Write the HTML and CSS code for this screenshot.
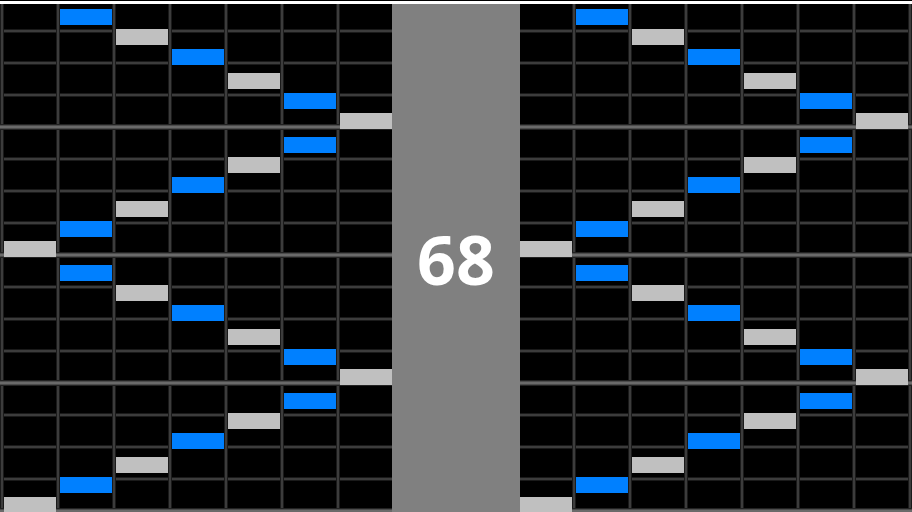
FILE: index.html
```html
<!doctype html>
<html>

<head>
    <title>Roll</title>
    <link rel="stylesheet" href="styles.css">
</head>

<body>
    <div class="topbar"></div>

    <div class="stage">
        <div class="roll" id="rollLeft"></div>
        <div class="counter">68</div>
        <div class="roll roll-right" id="rollRight"></div>
    </div>

    <script>
        // zigzag of note columns, one entry per note
        const cols = [1, 2, 3, 4, 5, 6, 5, 4, 3, 2, 1, 0];

        function fillRoll(roll, shift) {
            for (let i = 0; i < 24; i++) {
                const col = cols[i % cols.length];
                const note = document.createElement('div');
                note.className = 'note ' + (col % 2 ? 'blue' : 'grey');
                // three notes per 64px beat
                const top = 5 + 64 * Math.floor(i / 3) + 20 * (i % 3);
                note.style.top = top + 'px';
                note.style.left = (56 * col + 4 + shift) + 'px';
                roll.appendChild(note);
            }
        }

        fillRoll(document.getElementById('rollLeft'), 0);
        fillRoll(document.getElementById('rollRight'), -4);
    </script>
</body>
</html>
```

FILE: styles.css
```css
body {
    margin: 0;
    background: black;
    overflow: hidden;
}

/* Thin white strip along the top */
.topbar {
    height: 3px;
    border-top: 1px solid black;
    background: white;
}

.stage {
    display: flex;
    height: 508px;
}

/* Piano roll grid */
.roll {
    position: relative;
    width: 392px;
    overflow: hidden;
    background-color: black;
    background-image:
        linear-gradient(180deg, #222 0 1px, #4c4c4c 1px 2px, #6a6a6a 2px 4px, #4c4c4c 4px 5px, #222 5px 6px, transparent 6px),
        linear-gradient(90deg, #1a1a1a 0 1px, #3c3c3c 1px 3px, #1a1a1a 3px 4px, transparent 4px),
        linear-gradient(180deg, #1a1a1a 0 1px, #3c3c3c 1px 3px, #1a1a1a 3px 4px, transparent 4px);
    background-size: 100% 128px, 56px 100%, 100% 32px;
    background-position: 0 120px, 0 0, 0 25px;
}

.roll-right {
    background-position: 0 120px, -4px 0, 0 25px;
}

.note {
    position: absolute;
    width: 52px;
    height: 16px;
}

.note.blue {
    background: #0080ff;
}

.note.grey {
    background: #c0c0c0;
}

/* Middle counter band */
.counter {
    width: 128px;
    background: #808080;
    color: white;
    display: flex;
    align-items: center;
    justify-content: center;
    font-family: "Open Sans", sans-serif;
    font-weight: 700;
    font-size: 68px;
}
```
